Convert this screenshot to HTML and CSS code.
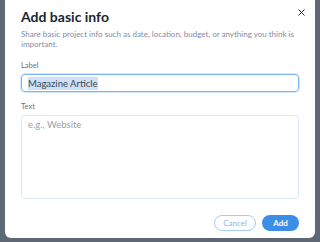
FILE: index.html
```html
<!DOCTYPE html>
<html lang="en">
<head>
  <meta charset="UTF-8" />
  <meta name="viewport" content="width=device-width, initial-scale=1.0"/>
  <title>Add basic info</title>
  <link rel="stylesheet" href="styles.css">
</head>
<body>
  <!-- Modal -->
  <div class="modal">
    <button class="close-btn" aria-label="Close">
      <svg width="7" height="7" viewBox="0 0 7 7"><path d="M0.5 0.5L6.5 6.5M6.5 0.5L0.5 6.5" stroke="#20303c" stroke-width="1" fill="none"/></svg>
    </button>
    <h1>Add basic info</h1>
    <p class="desc">Share basic project info such as date, location, budget, or anything you think is important.</p>

    <label class="field-label">Label</label>
    <div class="input active"><span class="selected">Magazine Article</span></div>

    <label class="field-label">Text</label>
    <div class="textarea"><span class="placeholder">e.g., Website</span></div>

    <div class="actions">
      <button class="btn btn-cancel">Cancel</button>
      <button class="btn btn-add">Add</button>
    </div>
  </div>
</body>
</html>
```

FILE: styles.css
```css
:root {
  --primary: #3b8ee8;
  --text: #1b2631;
  --muted: #868aa5;
  --radius: 6px;
}

body {
  margin: 0;
  height: 242px;
  overflow: hidden;
  background: #5d6874;
  font-family: 'Lato', sans-serif;
  color: var(--text);
}

.modal {
  position: relative;
  margin: 0 5px;
  height: 238px;
  box-sizing: border-box;
  background: #fff;
  border-radius: 0 0 var(--radius) var(--radius);
  padding: 8px 16px 0 16px;
}

.close-btn {
  position: absolute;
  top: 9px;
  right: 10px;
  background: none;
  border: none;
  padding: 0;
  cursor: pointer;
  line-height: 0;
}

h1 {
  margin: 0 0 3px;
  font-size: 14px;
  line-height: 18px;
  font-weight: 700;
}

.desc {
  margin: 0 0 12px;
  font-size: 8px;
  line-height: 10px;
  color: var(--muted);
}

.field-label {
  display: block;
  font-size: 7.5px;
  line-height: 10px;
  color: #6b7280;
  margin-bottom: 3px;
}

.input {
  height: 16px;
  border: 1px solid #7cb6f5;
  border-radius: 4px;
  box-shadow: 0 0 0 1px #d3e6fb;
  padding: 0 6px;
  display: flex;
  align-items: center;
  font-size: 9.5px;
  margin-bottom: 10px;
}

.selected {
  background: #cde2fa;
  color: #3a4652;
  padding: 1px 0;
}

.textarea {
  height: 76px;
  border: 1px solid #dce9fa;
  border-radius: 4px;
  padding: 3px 6px;
  font-size: 9.5px;
  line-height: 12px;
}

.placeholder {
  color: #9aa0ab;
}

.actions {
  display: flex;
  justify-content: flex-end;
  gap: 6px;
  margin-top: 16px;
}

.btn {
  height: 16px;
  border-radius: 8px;
  font-family: inherit;
  font-size: 8px;
  padding: 0;
  cursor: pointer;
}

.btn-cancel {
  width: 42px;
  background: #fff;
  border: 1px solid #a9cbf6;
  color: #8fb2e4;
}

.btn-add {
  width: 37px;
  background: var(--primary);
  border: none;
  color: #fff;
  font-weight: 700;
}
```
